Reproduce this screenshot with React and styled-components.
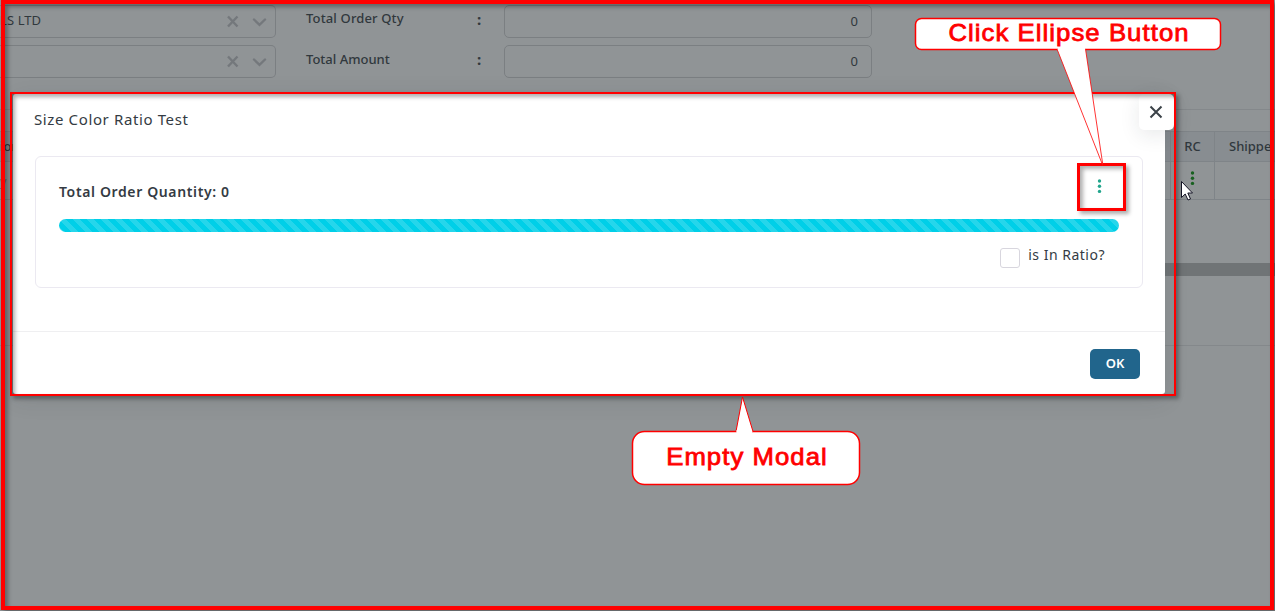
import React from "react";
import styled, { createGlobalStyle } from "styled-components";

const Global = createGlobalStyle`
  * { box-sizing: border-box; }
  body { margin: 0; overflow: hidden; }
`;
const Screen = styled.div`
  position: relative; width: 1275px; height: 611px; overflow: hidden;
  background: #909496; color: #30383d;
  font-family: "Noto Sans", "Open Sans", sans-serif; font-size: 13px;
`;
const Page = styled.main`display: flex; flex-direction: column;`;
const Form = styled.section`
  display: grid; grid-template-columns: 276px 198px 30px 368px;
  grid-template-rows: 33px 33px; row-gap: 7px; padding-top: 5px; height: 109px;
`;
const Select = styled.div`
  display: flex; align-items: center; gap: 13px; padding-right: 8px;
  border: 1px solid #7b7f82; border-left: 0; border-radius: 0 5px 5px 0; color: #74787c;
`;
const SelectValue = styled.span`
  flex: 1; color: #30383d; line-height: 20px; white-space: nowrap;
  padding-bottom: 3px; letter-spacing: .1px;
`;
const Label = styled.label`
  padding: ${p => p.$top || 3}px 0 0 30px; line-height: 20px; font-weight: 500;
  font-size: 13px; letter-spacing: ${p => p.$track || 0}px;
`;
const Colon = styled.span`padding: 4px 0 0 3px; font-weight: 700; font-size: 15px; line-height: 20px;`;
const NumberField = styled.div`
  display: flex; align-items: center; justify-content: flex-end; padding: 0 13px 2px 0;
  border: 1px solid #7b7f82; border-radius: 5px; font-size: 13px;
`;
const TableArea = styled.section`
  height: 237px; border: solid #84888b; border-width: 1px 0; padding-top: 21px;
`;
const Row = styled.div`
  display: grid; grid-template-columns: 1171px 44px 1fr;
  height: ${p => p.$head ? 31 : 38}px; border-top: ${p => p.$head ? 1 : 0}px solid #7f8488;
  border-bottom: 1px solid #7f8488; background: ${p => p.$head ? "#888d91" : "transparent"};
  font-weight: ${p => p.$head ? 500 : 400};
`;
const Cell = styled.div`
  display: flex; align-items: center; justify-content: ${p => p.$center ? "center" : "flex-start"};
  border-right: 1px solid #7f8488; padding: 0 0 ${p => p.$lift || 0}px ${p => p.$pad || 0}px;
  white-space: nowrap; font-size: 13px; color: ${p => p.$muted ? "#65696d" : "inherit"};
  &:last-child { border-right: 0; }
`;
const ScrollBar = styled.div`height: 13px; margin: 63px 0 0 20px; background: #707476;`;

const Modal = styled.section`
  position: absolute; left: 13px; top: 94px; width: 1152px; height: 300px;
  background: #fff; box-shadow: 0 4px 24px rgba(34, 41, 47, .12);
  border-radius: 3px; display: flex; flex-direction: column; color: #343b43;
`;
const ModalTitle = styled.h1`
  margin: 0; padding: 13px 21px 0; height: 62px; font-size: 15px; line-height: 24px;
  font-weight: 400; letter-spacing: .62px;
`;
const Card = styled.div`
  margin: 0 22px; height: 132px; border: 1px solid #ebe9f1; border-radius: 6px; padding: 23px 23px 0;
`;
const CardHeader = styled.div`display: flex; justify-content: space-between; height: 39px; padding-right: 17px;`;
const MenuDots = styled.span`display: block; height: 15px; line-height: 0; margin-top: -1px;`;
const Quantity = styled.strong`font-size: 14px; font-weight: 600; line-height: 24px; letter-spacing: .63px;`;
const Progress = styled.div`
  height: 13px; border-radius: 7px; background-color: #00cfe8;
  background-image: linear-gradient(45deg, rgba(255,255,255,.15) 25%, transparent 25%, transparent 50%, rgba(255,255,255,.15) 50%, rgba(255,255,255,.15) 75%, transparent 75%);
  background-size: 14px 14px;
`;
const Ratio = styled.label`
  display: flex; justify-content: flex-end; gap: 8px; padding-right: 14px; margin-top: 11px;
  font-size: 14px; line-height: 24px; letter-spacing: .5px;
`;
const Checkbox = styled.span`width: 20px; height: 20px; margin-top: 5px; border: 1px solid #d8d6de; border-radius: 3px;`;
const Footer = styled.footer`
  margin-top: auto; height: 63px; border-top: 1px solid #efeff1;
  display: flex; justify-content: flex-end; padding: 17px 25px 0;
`;
const OkButton = styled.button`
  width: 50px; height: 30px; border: 0; border-radius: 5px; color: #fff;
  background: #21658c; font: 600 13px "Noto Sans", sans-serif; padding: 0 0 2px;
`;
const CloseButton = styled.button`
  position: absolute; left: 1126px; top: 0; width: 35px; height: 36px;
  border: 0; border-radius: 5px; background: #fff; padding: 0 1px 0 0; color: #3b4248;
  display: grid; place-items: center; box-shadow: 0 5px 20px rgba(34, 41, 47, .1);
`;
const Frame = styled.div`
  position: absolute; left: ${p => p.$x}px; top: ${p => p.$y}px;
  width: ${p => p.$w}px; height: ${p => p.$h}px; border: ${p => p.$b}px solid #f00;
  pointer-events: none;
  box-shadow: 3px 3px 4px rgba(0,0,0,.32), inset 3px 3px 4px rgba(0,0,0,.32);
`;
const Drawing = styled.svg`position: absolute; left: 0; top: 0; pointer-events: none;`;
const Callout = styled.div`
  position: absolute; left: ${p => p.$x}px; top: ${p => p.$y}px;
  width: ${p => p.$w}px; height: ${p => p.$h}px; display: flex; align-items: center; justify-content: center;
  color: #f00; font: 400 24px "Liberation Sans", Arial, sans-serif; letter-spacing: 1px;
  transform: scaleX(1.07);
  -webkit-text-stroke: .8px #f00; white-space: nowrap; padding-bottom: 2px;
`;

const Clear = () => <svg width="12" height="13" viewBox="0 0 12 13"><path d="M1 1.5 10.5 11.500M10.500 1.5 1 11.500" stroke="currentColor" strokeWidth="2.4" /></svg>;
const Chevron = () => <svg width="15" height="10" viewBox="0 0 15 10"><path d="M2 2.5 7.5 7.8 13 2.5" fill="none" stroke="currentColor" strokeWidth="2.4" strokeLinecap="round" /></svg>;
const Dots = ({ color }) => <svg width="5" height="15" viewBox="0 0 5 15" fill={color}><circle cx="2.5" cy="2" r="1.7" /><circle cx="2.5" cy="7.2" r="1.7" /><circle cx="2.5" cy="12.4" r="1.7" /></svg>;

export default function App() {
  return (
    <Screen>
      <Global />
      <Page>
        <Form>
          <Select><SelectValue>LS LTD</SelectValue><Clear /><Chevron /></Select>
          <Label $track={0.15}>Total Order Qty</Label><Colon>:</Colon><NumberField>0</NumberField>
          <Select><SelectValue /><Clear /><Chevron /></Select>
          <Label $top={4}>Total Amount</Label><Colon>:</Colon><NumberField>0</NumberField>
        </Form>
        <TableArea>
          <Row $head><Cell $lift={2}>ion</Cell><Cell $center $lift={2}>RC</Cell><Cell $pad={14} $lift={2}>Shippe</Cell></Row>
          <Row><Cell $muted>y</Cell><Cell $center $lift={5}><Dots color="#17601f" /></Cell><Cell /></Row>
          <ScrollBar />
        </TableArea>
      </Page>
      <Modal>
        <ModalTitle>Size Color Ratio Test</ModalTitle>
        <Card>
          <CardHeader><Quantity>Total Order Quantity: 0</Quantity><MenuDots><Dots color="#21a58c" /></MenuDots></CardHeader>
          <Progress />
          <Ratio><Checkbox />is In Ratio?</Ratio>
        </Card>
        <Footer><OkButton>OK</OkButton></Footer>
        <CloseButton><svg width="14" height="14" viewBox="0 0 14 14"><path d="M1.5 1.5 12.5 12.5M12.5 1.5 1.5 12.5" stroke="currentColor" strokeWidth="2" /></svg></CloseButton>
      </Modal>
      <Frame $x={1} $y={0} $w={1273} $h={610} $b={4} />
      <Frame $x={10} $y={92} $w={1166} $h={304} $b={2} />
      <Frame $x={1077} $y={163} $w={49} $h={48} $b={3} />
      <Drawing width="1275" height="611" viewBox="0 0 1275 611">
        <g fill="#fff" stroke="#f00">
          <rect x="915.5" y="18.5" width="305" height="31" rx="6" strokeWidth="1.5" />
          <path d="M1057 49 1103 166 1085.500 49" strokeWidth=".8" />
          <path d="M1057.500 47H1085V51H1058.500Z" stroke="none" />
          <rect x="632.5" y="431.500" width="227" height="53" rx="12" strokeWidth="1.5" />
          <path d="M736 431.500 742.500 397 753 431.500" strokeWidth="1" />
          <path d="M736.500 430H752V434H736.500Z" stroke="none" />
        </g>
        <path d="M1181.500 181.500V197.500L1185.200 194 1188 200 1190.500 199 1187.800 193H1192.500Z" fill="#fff" stroke="#151526" />
      </Drawing>
      <Callout $x={916} $y={18} $w={306} $h={32}>Click Ellipse Button</Callout>
      <Callout $x={633} $y={431} $w={228} $h={54}>Empty Modal</Callout>
    </Screen>
  );
}
